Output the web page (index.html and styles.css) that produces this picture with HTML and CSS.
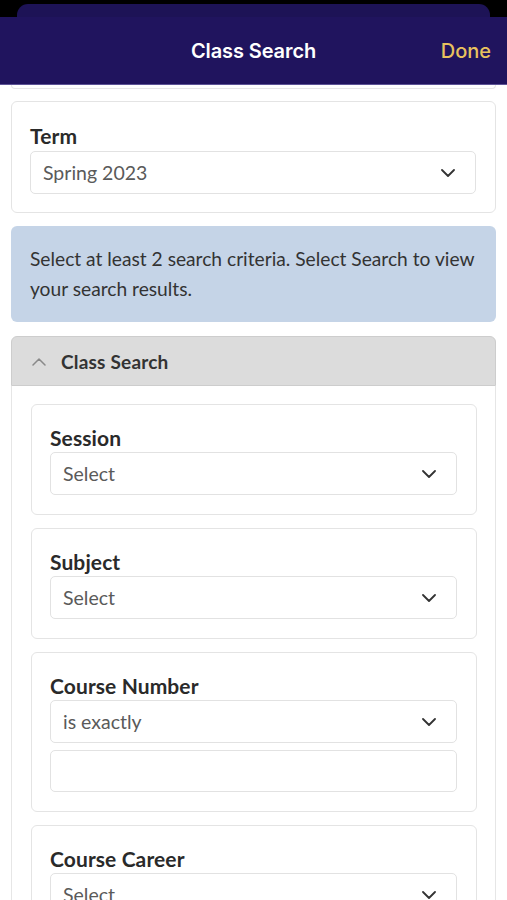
FILE: index.html
```html
<!DOCTYPE html>
<html lang="en">
<head>
<meta charset="utf-8">
<title>Class Search</title>
<link rel="stylesheet" href="styles.css">
</head>
<body>
<div class="top"><div class="back-sheet"></div></div>
<header class="nav">
  <h1 class="nav-title">Class Search</h1>
  <span class="nav-done">Done</span>
</header>
<main class="content">
  <div class="prev-stub"></div>

  <section class="card term-card">
    <label class="field-label">Term</label>
    <div class="select">
      <span class="select-value">Spring 2023</span>
      <svg class="chev" width="14" height="8" viewBox="0 0 14 8"><path d="M1 1 L7 7 L13 1" fill="none" stroke="#333" stroke-width="1.8" stroke-linecap="round" stroke-linejoin="round"/></svg>
    </div>
  </section>

  <div class="info">Select at least 2 search criteria. Select Search to view your search results.</div>

  <section class="accordion">
    <div class="acc-head">
      <svg class="chev-up" width="14" height="8" viewBox="0 0 14 8"><path d="M1 7 L7 1 L13 7" fill="none" stroke="#8a8a8a" stroke-width="1.5" stroke-linecap="round" stroke-linejoin="round"/></svg>
      <span class="acc-title">Class Search</span>
    </div>
    <div class="acc-body">
      <div class="card inner">
        <label class="field-label">Session</label>
        <div class="select">
          <span class="select-value">Select</span>
          <svg class="chev" width="14" height="8" viewBox="0 0 14 8"><path d="M1 1 L7 7 L13 1" fill="none" stroke="#333" stroke-width="1.8" stroke-linecap="round" stroke-linejoin="round"/></svg>
        </div>
      </div>
      <div class="card inner">
        <label class="field-label">Subject</label>
        <div class="select">
          <span class="select-value">Select</span>
          <svg class="chev" width="14" height="8" viewBox="0 0 14 8"><path d="M1 1 L7 7 L13 1" fill="none" stroke="#333" stroke-width="1.8" stroke-linecap="round" stroke-linejoin="round"/></svg>
        </div>
      </div>
      <div class="card inner">
        <label class="field-label">Course Number</label>
        <div class="select">
          <span class="select-value">is exactly</span>
          <svg class="chev" width="14" height="8" viewBox="0 0 14 8"><path d="M1 1 L7 7 L13 1" fill="none" stroke="#333" stroke-width="1.8" stroke-linecap="round" stroke-linejoin="round"/></svg>
        </div>
        <div class="text-input"></div>
      </div>
      <div class="card inner">
        <label class="field-label">Course Career</label>
        <div class="select">
          <span class="select-value">Select</span>
          <svg class="chev" width="14" height="8" viewBox="0 0 14 8"><path d="M1 1 L7 7 L13 1" fill="none" stroke="#333" stroke-width="1.8" stroke-linecap="round" stroke-linejoin="round"/></svg>
        </div>
      </div>
    </div>
  </section>
</main>
</body>
</html>
```
FILE: styles.css
```css
* { box-sizing: border-box; }
html, body { margin: 0; padding: 0; }
body {
  background: #ffffff;
  font-family: Lato, "Noto Sans", sans-serif;
  color: #2b2b2b;
  width: 507px;
  overflow: hidden;
  height: 900px;
}
.top {
  background: #000;
  height: 17px;
  padding: 4px 17px 0 17px;
}
.back-sheet {
  background: #1d1356;
  height: 13px;
  border-radius: 11px 11px 0 0;
}
.nav {
  background: #20145e;
  height: 68px;
  border-bottom: 1px solid #5d5396;
  display: flex;
  align-items: center;
  justify-content: center;
  position: relative;
}
.nav-title {
  margin: 0;
  font-family: Inter, "Liberation Sans", sans-serif;
  font-weight: 600;
  font-size: 20px;
  color: #ffffff;
  letter-spacing: -0.1px;
}
.nav-done {
  position: absolute;
  right: 16px;
  top: 50%;
  transform: translateY(-50%);
  font-family: Inter, "Liberation Sans", sans-serif;
  font-weight: 500;
  font-size: 20px;
  color: #e9c25e;
}
.content {
  padding: 0 11px;
}
.prev-stub {
  height: 4px;
  border: 1px solid #e6e6e6;
  border-top: none;
  border-radius: 0 0 6px 6px;
}
.card {
  border: 1px solid #e4e4e4;
  border-radius: 6px;
  background: #fff;
  padding: 21px 19px 19px 18px;
  display: flex;
  flex-direction: column;
}
.term-card {
  margin-top: 12px;
  padding-top: 22px;
  padding-bottom: 18px;
}
.term-card .field-label {
  margin-bottom: 4px;
}
.field-label {
  font-weight: 700;
  font-size: 21px;
  line-height: 23px;
  color: #2a2a2a;
  letter-spacing: 0.1px;
  margin-bottom: 3px;
}
.select {
  height: 43px;
  border: 1px solid #e2e2e2;
  border-radius: 5px;
  display: flex;
  align-items: center;
  justify-content: space-between;
  padding: 0 20px 0 12px;
}
.select-value {
  font-size: 19.5px;
  color: #5a5a5a;
}
.chev { display: block; }
.text-input {
  margin-top: 7px;
  height: 42px;
  border: 1px solid #e2e2e2;
  border-radius: 5px;
}
.info {
  margin-top: 13px;
  background: #c5d4e7;
  border-radius: 6px;
  padding: 18px 19px 17px 19px;
  font-size: 19.2px;
  line-height: 30px;
  color: #333;
  height: 96px;
}
.accordion {
  margin-top: 14px;
}
.acc-head {
  height: 50px;
  background: #dcdcdc;
  border: 1px solid #cdcdcd;
  border-radius: 6px 6px 0 0;
  display: flex;
  align-items: center;
  padding-left: 20px;
}
.chev-up { margin-right: 15px; margin-top: 2px; }
.acc-title {
  font-weight: 700;
  font-size: 19px;
  color: #333;
  letter-spacing: 0.2px;
}
.acc-body {
  border-left: 1px solid #e6e6e6;
  border-right: 1px solid #e6e6e6;
  padding: 18px 18px 0 19px;
  display: flex;
  flex-direction: column;
  gap: 13px;
  height: 600px;
}
```
